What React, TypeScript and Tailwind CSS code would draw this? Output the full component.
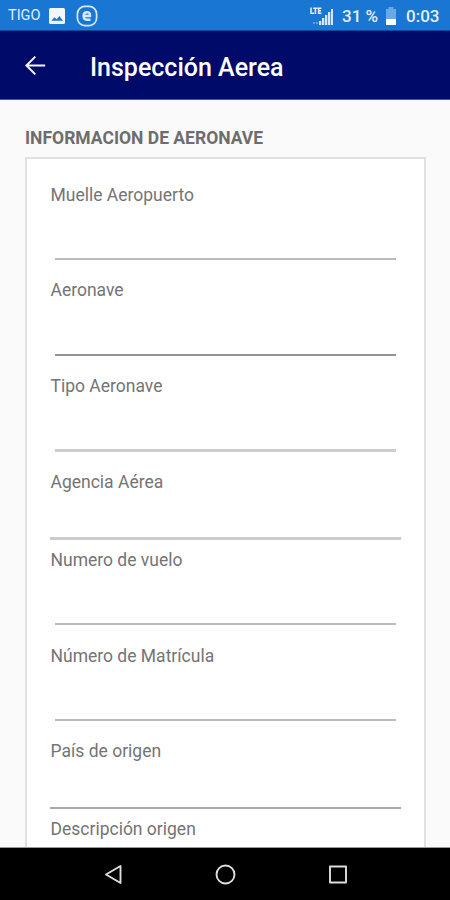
const fields = [
  { label: 'Muelle Aeropuerto', row: 'h-[95px]', line: 'mx-[5px] mt-[51px] h-[2px] bg-[#bababa]' },
  { label: 'Aeronave', row: 'h-24', line: 'mx-[5px] mt-[52px] h-[2px] bg-[#939393]' },
  { label: 'Tipo Aeronave', row: 'h-24', line: 'mx-[5px] mt-[51px] h-[3px] bg-[#cdcdcd]' },
  { label: 'Agencia Aérea', row: 'h-[78px]', line: 'mt-[43px] h-[3px] bg-[#cccccc]' },
  { label: 'Numero de vuelo', row: 'h-24', line: 'mx-[5px] mt-[51px] h-[2px] bg-[#bababa]' },
  { label: 'Número de Matrícula', row: 'h-[95px]', line: 'mx-[5px] mt-[51px] h-[2px] bg-[#bababa]' },
  { label: 'País de origen', row: 'h-[78px]', line: 'mt-11 h-[2px] bg-[#a8a8a8]' },
  { label: 'Descripción origen', row: 'h-8', line: 'hidden' },
];

function StatusBar() {
  return (
    <div className="h-[31px] shrink-0 bg-[#1976d2] border-b border-[#0b4a9c] flex items-center justify-between text-[#e3effb]">
      <div className="flex items-center pl-2 pt-[2px]">
        <span className="w-[34px] text-[14.5px]">TIGO</span>
        <svg width="18" height="18" viewBox="0 0 18 18" className="ml-[6px]">
          <rect x="1" y="1" width="16" height="16" rx="1.5" fill="#f0f7ff" />
          <path d="M3.5 13.8 L6.3 10.3 L8.6 12.2 L11.5 9 L15 13.8 Z" fill="#1976d2" />
        </svg>
        <svg width="22" height="22" viewBox="0 0 22 22" className="ml-[10px]" fill="none" stroke="#d6e8fb">
          <rect x="1.4" y="1.4" width="19.2" height="19.2" rx="7.5" strokeWidth="1.7" />
          <path d="M8 11 H14 V9.7 Q14 7.3 11 7.3 Q7.6 7.3 7.6 11 Q7.6 14.7 11 14.7 H14.5" strokeWidth="2.4" />
        </svg>
      </div>
      <div className="flex items-center pr-[10px] pt-[3px] text-[17px] font-medium">
        <svg width="24" height="20" viewBox="0 0 24 20" className="-mt-[2px]" fill="#d3e6fa">
          <g fill="none" stroke="#e3effb" strokeWidth="1.5">
            <path d="M2 1.5 V7.2 H5 M4.2 2.2 H8.6 M6.4 2.2 V8 M12.4 2.2 H9.6 V7.2 H12.4 M9.6 4.7 H12" />
          </g>
          <rect x="4" y="16" width="2" height="2" opacity="0.4" />
          <rect x="7" y="16" width="2" height="2" opacity="0.4" />
          <rect x="10" y="15" width="2.3" height="4" />
          <rect x="13" y="12" width="2.3" height="7" />
          <rect x="16" y="9" width="2.3" height="10" />
          <rect x="19" y="6" width="2.3" height="13" />
          <rect x="22" y="3" width="2" height="16" />
        </svg>
        <span className="ml-[9px] w-[38px] whitespace-nowrap">31 %</span>
        <svg width="12" height="20" viewBox="0 0 12 20" className="ml-[5px] -mt-[1px]">
          <path d="M3.5 1 H8.5 V3 H11 V19 H1 V3 H3.5 Z" fill="#6ba8e6" />
          <rect x="1" y="13" width="10" height="6" fill="#ffffff" />
        </svg>
        <span className="ml-[9px] w-[34px] whitespace-nowrap">0:03</span>
      </div>
    </div>
  );
}

function NavBar() {
  return (
    <div className="h-[53px] shrink-0 bg-black border-t border-[#999999] flex items-center justify-center">
      <svg width="450" height="52" viewBox="0 0 450 52" fill="none" stroke="#dedede" strokeWidth="1.9" strokeLinejoin="round">
        <path d="M120.5 18 V35 L106 26.5 Z" />
        <circle cx="225.5" cy="26.5" r="9" />
        <rect x="330" y="18.5" width="16" height="16" />
      </svg>
    </div>
  );
}

export default function App() {
  return (
    <div className="w-[450px] h-[900px] flex flex-col overflow-hidden bg-[#fafafa] font-['Roboto',sans-serif]">
      <StatusBar />

      {/* App bar */}
      <header className="h-[69px] shrink-0 bg-[#000a69] border-b border-[#4c5293] flex items-center text-white">
        <svg width="22" height="22" viewBox="0 0 22 22" className="ml-6 mt-[1px]" fill="none" stroke="#f4f4ff" strokeWidth="2">
          <path d="M21.2 10.5 H2.4 M11.3 1.6 L2.4 10.5 L11.3 19.4" />
        </svg>
        <h1 className="ml-11 pt-[5px] text-[25px] leading-8 font-medium whitespace-nowrap">Inspección Aerea</h1>
      </header>

      {/* Form */}
      <main className="flex-1 min-h-0 overflow-hidden px-[25px] pt-[26px]">
        <h2 className="h-[31px] text-[17.5px] leading-6 font-bold text-[#6d6d6d] whitespace-nowrap">INFORMACION DE AERONAVE</h2>
        <div className="w-[401px] h-[700px] border-2 border-[#e1e1e1] bg-white px-[23px] pt-6">
          {fields.map((field) => (
            <div key={field.label} className={field.row}>
              <label className="block h-6 pl-[0.5px] text-[17.5px] leading-6 text-[#747474] whitespace-nowrap">{field.label}</label>
              <div className={field.line}></div>
            </div>
          ))}
        </div>
      </main>

      <NavBar />
    </div>
  );
}
